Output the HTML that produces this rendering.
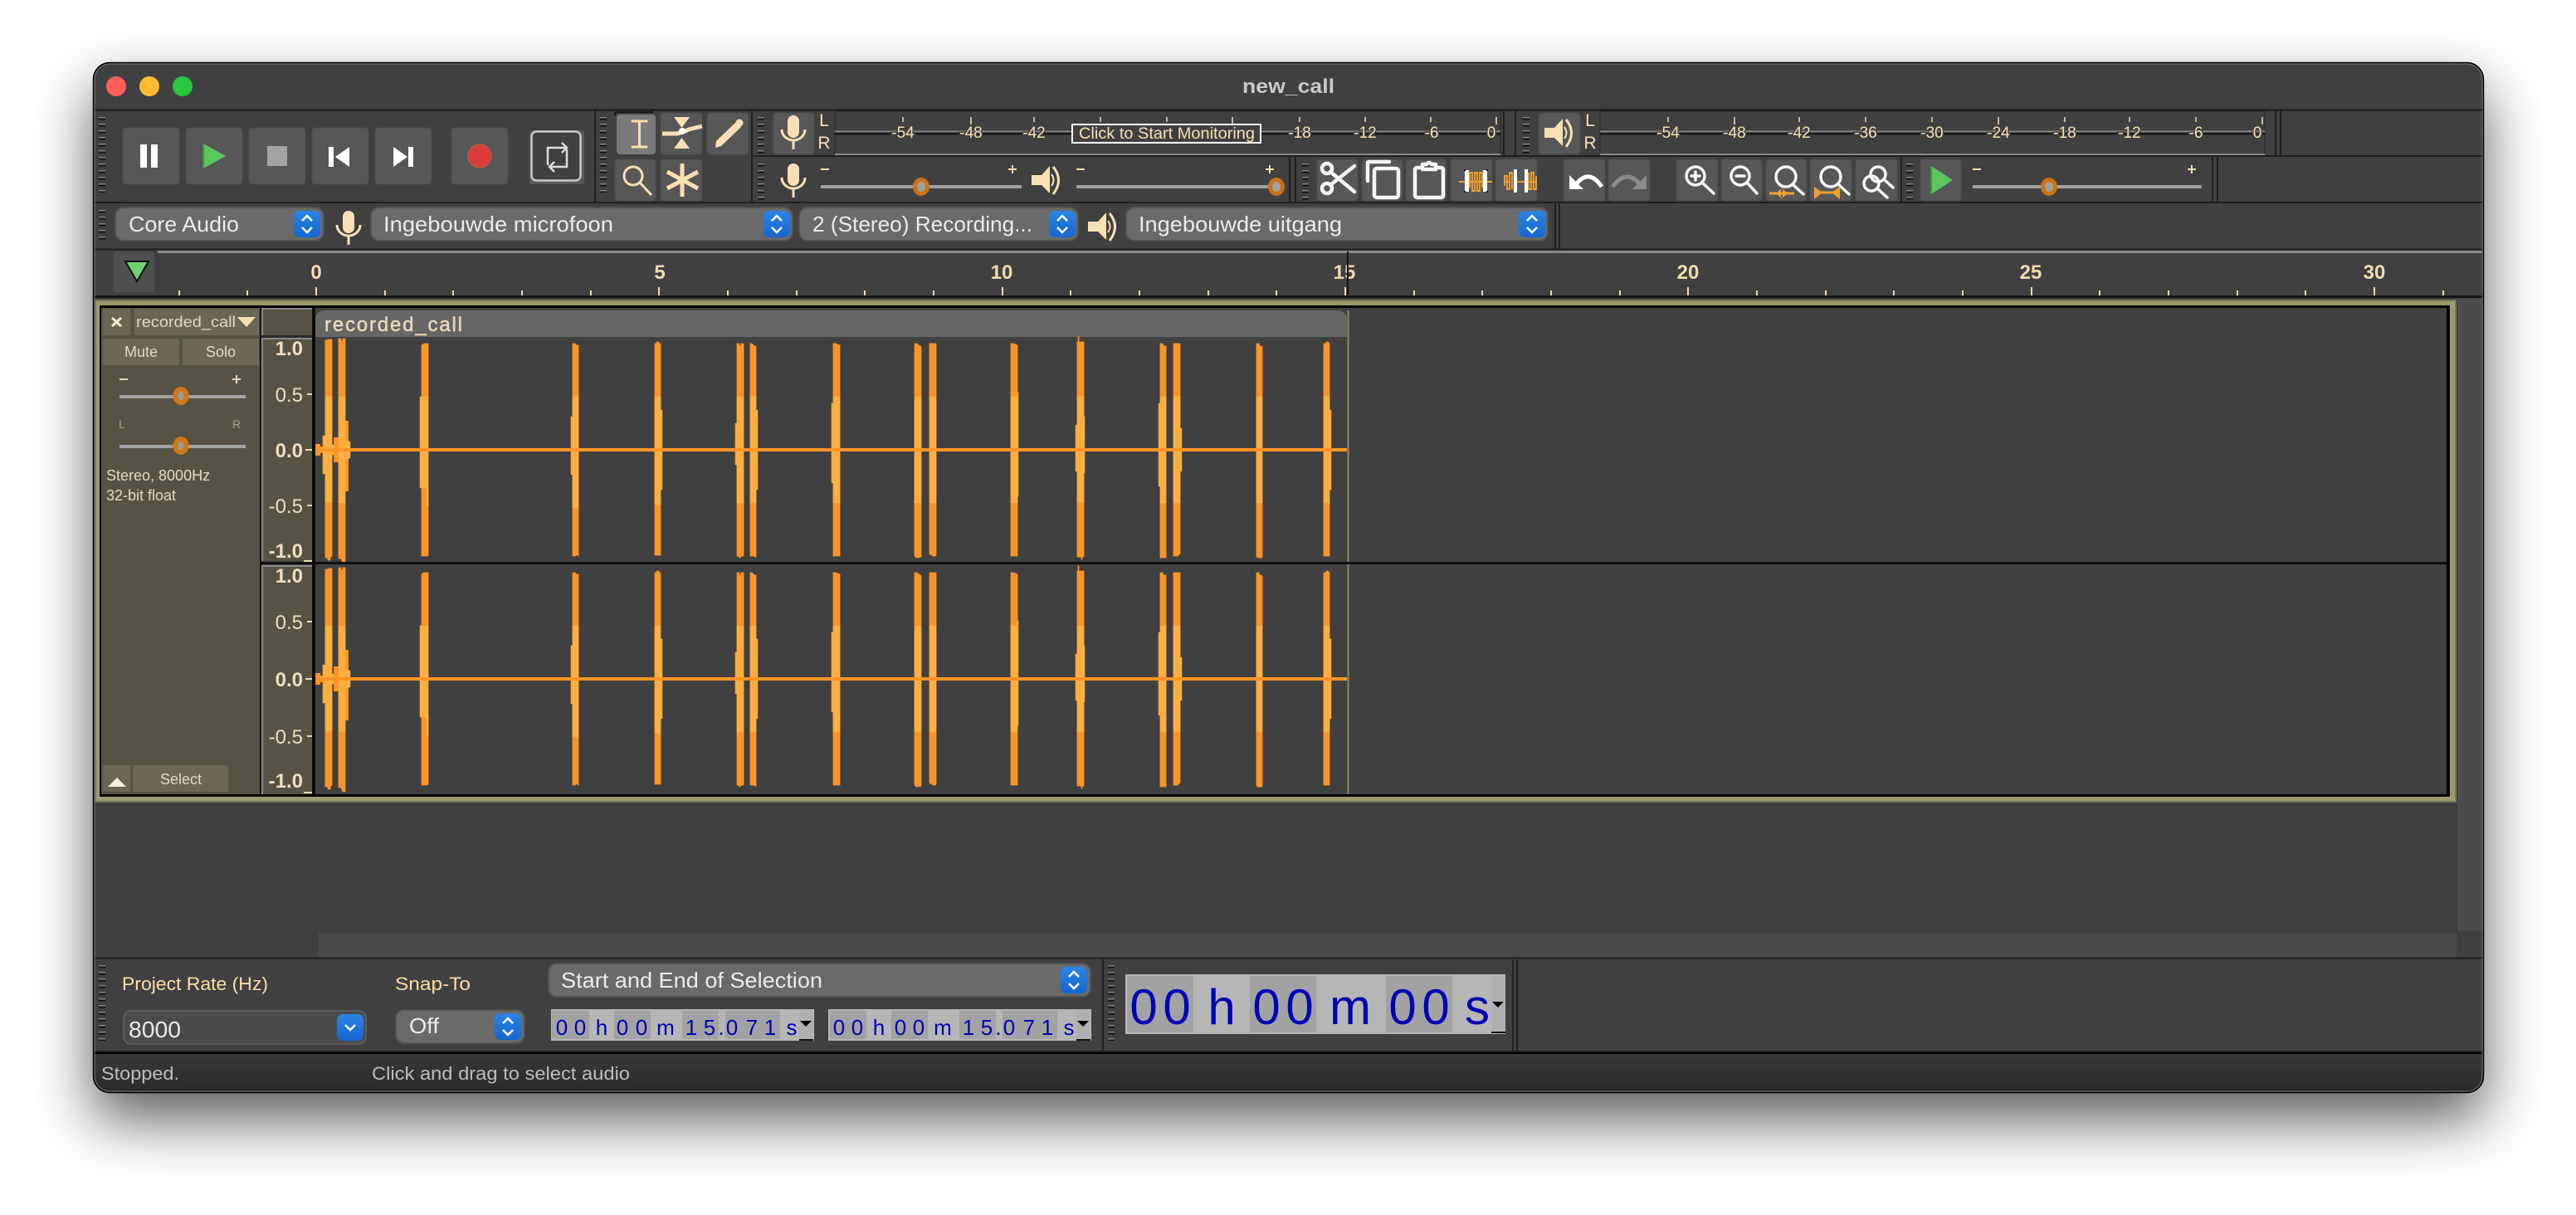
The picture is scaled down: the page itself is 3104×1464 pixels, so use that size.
<!DOCTYPE html>
<html><head><meta charset="utf-8"><title>new_call</title>
<style>
html,body{margin:0;padding:0;background:#fff;width:3104px;height:1464px;overflow:hidden}
#w{position:absolute;left:112px;top:75px;width:2881px;height:1242px;border-radius:20px;box-shadow:0 32px 70px rgba(0,0,0,.64)}
svg{position:absolute;left:0;top:0}
text{font-family:"Liberation Sans",sans-serif}
.c{fill:#f8e0b4}
.m{font-size:19px;fill:#f8e0b4;text-anchor:middle;stroke:#404040;stroke-width:3px;paint-order:stroke}
.r{font-size:24px;font-weight:bold;fill:#f3d9ad;text-anchor:middle}
.s{font-size:26px;fill:#ebebeb}
.l{font-size:22px;fill:#ffdca8}
.v{font-size:24px;fill:#f0dfbf;text-anchor:end;font-weight:bold}
.t{font-size:18px;fill:#e4d9bf}
.d{font-size:26px;fill:#0000b4;text-anchor:middle}
.D{font-size:60px;fill:#0000b4;text-anchor:middle}
.g{fill:none;stroke-width:8}
.ic{fill:none;stroke:#f8e0b4;stroke-width:3;stroke-linecap:round}
.wh{fill:none;stroke:#f6f6f6;stroke-width:4.5;stroke-linecap:round;stroke-linejoin:round}
.zm{fill:none;stroke:#f6f6f6;stroke-width:3.5;stroke-linecap:round;stroke-linejoin:round}
.or{fill:none;stroke:#f0a030;stroke-width:1.9}
</style></head>
<body>
<div id="w"></div>
<svg width="3104" height="1464" viewBox="0 0 3104 1464" xmlns="http://www.w3.org/2000/svg">
<defs>
<clipPath id="win"><rect x="112" y="75" width="2881" height="1242" rx="20"/></clipPath>
<linearGradient id="blue" x1="0" y1="0" x2="0" y2="1"><stop offset="0" stop-color="#2b84e6"/><stop offset="1" stop-color="#1566cf"/></linearGradient>
<linearGradient id="sb" x1="0" y1="0" x2="0" y2="1"><stop offset="0" stop-color="#3a3a3a"/><stop offset="1" stop-color="#292929"/></linearGradient>
<g id="step"><rect x="0" y="0" width="32" height="32" rx="7" fill="url(#blue)"/><path d="M10 12l6-6 6 6M10 20l6 6 6-6" fill="none" stroke="#fff" stroke-width="2.4"/></g>
<g id="mic"><rect x="-7" y="-14" width="14" height="27" rx="7" fill="#f8e0b4"/><path d="M-14 3a14 13 0 0 0 28 0" fill="none" stroke="#f8e0b4" stroke-width="3"/><path d="M0 16V27" stroke="#f8e0b4" stroke-width="3"/></g>
<g id="spk"><path d="M-19-6H-7L3-17V16L-7 6H-19Z" fill="#f8e0b4"/><path d="M7-16Q20 0 7 17" fill="none" stroke="#f8e0b4" stroke-width="3"/><path d="M5-7Q10 0 5 7" fill="none" stroke="#f8e0b4" stroke-width="2"/></g>
<g id="thumb"><ellipse rx="7.5" ry="8.5" fill="#a0a0a0" stroke="#cc7212" stroke-width="5"/></g>
<g id="tt"><ellipse rx="6.5" ry="8" fill="#9a9a9a" stroke="#d07818" stroke-width="6"/></g>
<g id="wave">
<path fill="#fd9427" stroke="#fd9427" stroke-width=".8" d="M392 -132h3v-1h5v2v259l-2 2v3h-3v-3h-3z
M408 -134h3v3h2v-3h3v259l0 11h-3l-2-5h-3z
M508 -126l3-2h5v255l-1 1h-7z
M690 -128h3l2 2h2v254l-2-2-2 2h-3z
M789 -128h2v-2h3v2h2v255h-7z
M888 -128h3v3h2v-3h3v256h-3l-1 2-3-2h-1z
M904 -128h2l3 3h2v254h-1l-2-1h-4z
M1004 -128h3l5 2v254h-8z
M1102 -128h3l2 2h1l2 2v253l-5 1h-1l-2-2z
M1120 -128h8v255l-1 1h-3l-2-2h-2z
M1218 -128h3l5 2v254h-8z
M1298 -130h1v-6h1v6h6v259h-2v3h-1v-3h-5z
M1398 -128h3l1 3h3v255h-7z
M1414 -128h8v253l-3 3h-5z
M1514 -128h3v2l4 2v254h-6l-1-2z
M1595 -128h3v-2h2l2 2v256h-7z"/>
<path fill="#fd9427" d="M380 -7h6V7h-6zM386 -4h3V4h-3zM402 -15h6V15h-6zM416 -35h4v85h-4z"/>
<path fill="#ffae40" stroke="#ffae40" stroke-width=".5" d="M392 -64h8V63h-8z M389 -17h3v46h-3z M400 -6h2v12h-2z
M408 -64h8v-1 129h-8z M416 -11h4v22h-4z M420 -10h2v20h-2z
M506 -64h10v4 128h-2v-22h-8z
M690 -64h7V70h-7z M688 -40h2v70h-2z
M789 -64h7V66h-7z M796 -48h2v96h-2z
M888 -64h8V64h-8z M886 -32h2v50h-2z
M904 -64h7V64h-7z M911 -48h2v96h-2z
M1004 -64h8V64h-8z M1002 -56h2v96h-2z
M1102 -64h8V64h-8z
M1120 -64h8V64h-8z
M1218 -64h8V64h-8z M1226 -70h1v126h-1z
M1298 -64h8V64h-8z M1296 -30h2v56h-2z M1306 -40h1v68h-1z
M1398 -64h7V64h-7z M1396 -56h2v100h-2z
M1414 -64h8V64h-8z M1422 -26h2v52h-2z
M1514 -64h7V64h-7z
M1595 -64h7V64h-7z M1602 -48h2v96h-2z"/>
<rect x="380" y="-2" width="1243" height="4" fill="#fd9427"/>
</g>
</defs>
<g clip-path="url(#win)">
<rect x="112" y="75" width="2881" height="1242" fill="#404040"/>
<!-- title -->
<circle cx="140" cy="104" r="12" fill="#ff5f57"/><circle cx="180" cy="104" r="12" fill="#febc2e"/><circle cx="220" cy="104" r="12" fill="#28c840"/>
<text x="1552.5" y="112" text-anchor="middle" font-size="24" font-weight="bold" fill="#c9c9c9" textLength="111" lengthAdjust="spacingAndGlyphs">new_call</text>
<!-- row lines -->
<path d="M112 132.5H2993" stroke="#161616" stroke-width="2"/>
<path d="M906 188H2993M112 244H2993M112 300.5H2993" stroke="#1e1e1e" stroke-width="2"/>
<path d="M717 133V244M906 133V244M1554 189V244M1561 189V244M2291 189V244M2666 189V244M2672 189V244M1874 245V300M1879 245V300M1812 133V188M1826 133V188M2742 133V188M2748 133V188" stroke="#202020" stroke-width="2"/>
<!-- grips -->
<g class="g">
<path d="M123 141V232M727 141V232M917 141V186M917 197V242M1573 197V242M2301 197V242M1839 141V186M123 253V290M123 1163V1254M1339 1163V1254" stroke="#858585" stroke-dasharray="1.5 6.5"/>
<path d="M123 142.5V232M727 142.5V232M917 142.5V186M917 198.5V242M1573 198.5V242M2301 198.5V242M1839 142.5V186M123 254.5V290M123 1164.5V1254M1339 1164.5V1254" stroke="#121212" stroke-dasharray="2 6"/>
</g>
<!-- transport buttons -->
<g fill="#575757" stroke="#4d4d4d">
<rect x="148" y="154" width="68" height="68" rx="4"/><rect x="224" y="154" width="68" height="68" rx="4"/><rect x="300" y="154" width="68" height="68" rx="4"/><rect x="376" y="154" width="68" height="68" rx="4"/><rect x="452" y="154" width="68" height="68" rx="4"/><rect x="544" y="154" width="68" height="68" rx="4"/>
</g>
<path d="M169 174h8v28h-8zM182 174h8v28h-8z" fill="#fff"/>
<path d="M245 173L272 188 245 203Z" fill="#5cc65c"/><path d="M245 173V203" stroke="#3c9040" stroke-width="2"/>
<rect x="322" y="176" width="24" height="24" fill="#a3a3a3"/>
<path d="M396 177h6v24h-6zM421 177V201L404 189Z" fill="#fff"/>
<path d="M474 177V201L491 189ZM492 177h6v24h-6z" fill="#fff"/>
<ellipse cx="578" cy="188" rx="14" ry="14" fill="#dc3a3a" stroke="#b86a2a" stroke-width="1"/>
<rect x="638" y="157" width="66" height="65" rx="3" fill="#595959"/>
<rect x="640.500" y="158.500" width="59" height="59" rx="6" fill="#404040" stroke="#c8c8c8" stroke-width="2.500"/>
<path d="M660 199V178H683M677 172l6 6-6 6M683 180V201H662M668 195l-6 6 6 6" fill="none" stroke="#dcdcdc" stroke-width="2.500"/>
<!-- tools -->
<g fill="#575757" stroke="#4d4d4d">
<rect x="796" y="136" width="50" height="50" rx="4"/><rect x="852" y="136" width="50" height="50" rx="4"/><rect x="741" y="192" width="49" height="50" rx="4"/><rect x="796" y="192" width="50" height="50" rx="4"/>
<rect x="932" y="136" width="49" height="50" rx="4"/>
</g>
<path d="M741 139V137Q741 135 743 135H787" fill="none" stroke="#151515" stroke-width="2"/>
<rect x="743" y="138" width="47" height="48" rx="4" fill="#7a7a7a"/>
<path d="M762 146H779M770.500 146V177M762 177H779" class="ic" stroke-linecap="butt"/>
<path d="M812 141H831L821.500 154ZM812 179H831L821.500 166Z" fill="#f8e0b4"/>
<path d="M798 161H815Q822 160 830 156L846 152" fill="none" stroke="#f8e0b4" stroke-width="5"/><circle cx="822" cy="158" r="4" fill="#fff"/>
<path d="M862 178L863 170 887 147 893 153 869 176Z" fill="#f8e0b4"/><circle cx="891" cy="148" r="4.500" fill="#f8e0b4"/>
<circle cx="763" cy="212" r="11" class="ic"/><path d="M771 220L784 234" class="ic"/>
<path d="M822 197V237M804 207L841 227M841 207L804 227" fill="none" stroke="#f8e0b4" stroke-width="5"/>
<use href="#mic" x="956" y="153"/><use href="#mic" x="956" y="211"/><use href="#mic" x="420" y="268"/>
<!-- meters -->
<text x="993" y="152" font-size="21" class="c" text-anchor="middle">L</text><text x="993" y="179" font-size="21" class="c" text-anchor="middle">R</text>
<text x="1916" y="152" font-size="21" class="c" text-anchor="middle">L</text><text x="1916" y="179" font-size="21" class="c" text-anchor="middle">R</text>
<path d="M1006 134H1808V187H1006ZM1928 134H2729V187H1928Z" fill="#404040" stroke="#262626" stroke-width="1"/>
<path d="M1006 158.500H1808M1928 158.500H2729M1006 186H1808M1928 186H2729" stroke="#8b8b8b" stroke-width="2"/>
<path d="M1006 161H1808M1928 161H2729" stroke="#1a1a1a" stroke-width="3"/>
<path d="M1088 141V147M1246 141V147M1326 141V147M1406 141V147M1566 141V147M1645 141V147M1724 141V147M2010 141V147M2168 141V147M2248 141V147M2328 141V147M2488 141V147M2566 141V147M2646 141V147M1170 141V150M1485 141V150M1803 141V150M2090 141V150M2408 141V150M2726 141V150" stroke="#f8e0b4" stroke-width="1.500"/>
<g class="m">
<text x="1088" y="166">-54</text><text x="1170" y="166">-48</text><text x="1246" y="166">-42</text><text x="1566" y="166">-18</text><text x="1645" y="166">-12</text><text x="1725" y="166">-6</text><text x="1797" y="166">0</text>
<text x="2010" y="166">-54</text><text x="2090" y="166">-48</text><text x="2168" y="166">-42</text><text x="2248" y="166">-36</text><text x="2328" y="166">-30</text><text x="2408" y="166">-24</text><text x="2488" y="166">-18</text><text x="2566" y="166">-12</text><text x="2646" y="166">-6</text><text x="2720" y="166">0</text>
</g>
<rect x="1292" y="150" width="227" height="22" fill="#404040" stroke="#fff" stroke-width="2"/>
<text x="1300" y="167" font-size="19" class="c" textLength="212" lengthAdjust="spacingAndGlyphs">Click to Start Monitoring</text>
<use href="#spk" x="1262" y="217"/>
<rect x="1854" y="136" width="50" height="50" rx="4" fill="#575757" stroke="#4d4d4d"/><use href="#spk" x="1880" y="160"/>
<use href="#spk" x="1330" y="273"/>
<!-- sliders -->
<g fill="#a0a0a0"><rect x="989" y="223" width="242" height="4"/><rect x="1297" y="223" width="250" height="4"/><rect x="2377" y="223" width="276" height="4"/></g>
<use href="#thumb" x="1110" y="225"/><use href="#thumb" x="1538" y="225"/><use href="#thumb" x="2469" y="225"/>
<g stroke="#f8e0b4" stroke-width="2"><path d="M989 204H999M1215 204H1225M1220 199V209M1297 204H1307M1525 204H1535M1530 199V209M2377 204H2387M2636 204H2646M2641 199V209"/></g>
<!-- edit buttons -->
<g fill="#575757" stroke="#4d4d4d">
<rect x="1587" y="192" width="49" height="50" rx="4"/><rect x="1641" y="192" width="49" height="50" rx="4"/><rect x="1694" y="192" width="49" height="50" rx="4"/><rect x="1748" y="192" width="50" height="50" rx="4"/><rect x="1802" y="192" width="50" height="50" rx="4"/><rect x="1884" y="192" width="50" height="50" rx="4"/><rect x="1938" y="192" width="50" height="50" rx="4"/><rect x="2020" y="192" width="50" height="50" rx="4"/><rect x="2074" y="192" width="49" height="50" rx="4"/><rect x="2128" y="192" width="49" height="50" rx="4"/><rect x="2181" y="192" width="50" height="50" rx="4"/><rect x="2236" y="192" width="50" height="50" rx="4"/><rect x="2314" y="192" width="49" height="50" rx="4"/>
</g>
<g class="wh">
<circle cx="1599" cy="203" r="6"/><circle cx="1599" cy="227" r="6"/><path d="M1603 207L1632 231M1603 223L1632 200"/>
<path d="M1648 218V196Q1648 195 1650 195H1674"/><rect x="1656" y="203" width="29" height="35" rx="3"/>
<path d="M1714 202H1708Q1705 202 1705 205V235Q1705 238 1708 238H1736Q1739 238 1739 235V205Q1739 202 1736 202H1730M1714 204V198H1719Q1722 194 1725 198H1730V204Z"/>
</g>
<path d="M1758 219H1798M1812 219H1820M1827 219H1837M1840 219H1852" stroke="#f0a030" stroke-width="2"/>
<rect x="1765" y="205" width="5" height="26" fill="#fff"/><rect x="1787" y="205" width="5" height="26" fill="#fff"/>
<path d="M1771 226V208H1774V230H1777V208H1780V230H1783V208H1786V226" class="or"/>
<path d="M1813 224V212H1816V228H1819V208H1822V228" class="or"/><path d="M1842 208V228H1845V208H1848V228H1851V212" class="or"/>
<rect x="1824" y="204" width="4" height="28" fill="#fff"/><rect x="1837" y="204" width="4" height="28" fill="#fff"/>
<path d="M1764 204h2v2h-2zM1791 204h2v2h-2zM1764 230h2v2h-2zM1791 230h2v2h-2z" fill="#111"/>
<path d="M1891 211V228H1908Z" fill="#fff"/><path d="M1900 221Q1915 203 1930 225" fill="none" stroke="#fff" stroke-width="5"/>
<path d="M1984 211V228H1967Z" fill="#8b8b8b"/><path d="M1975 221Q1960 203 1943 225" fill="none" stroke="#8b8b8b" stroke-width="5"/>
<g class="zm">
<circle cx="2043" cy="212" r="11"/><path d="M2051 220L2065 233M2038 212H2048M2043 207V217"/>
<circle cx="2097" cy="212" r="11"/><path d="M2105 220L2117 233M2092 212H2102"/>
<circle cx="2152" cy="213" r="12"/><path d="M2160 222L2173 234"/>
<circle cx="2206" cy="213" r="12"/><path d="M2215 222L2228 234"/>
<circle cx="2263" cy="210" r="9"/><circle cx="2255" cy="221" r="9"/><path d="M2270 216L2281 226M2262 227L2274 238"/>
</g>
<path d="M2132 233H2162" stroke="#f0a030" stroke-width="3"/><path d="M2148 226V240L2140 233ZM2146 226V240L2154 233Z" fill="#f0a030"/>
<path d="M2186 232H2217" stroke="#f0a030" stroke-width="3"/><path d="M2186 225V240L2196 232ZM2217 225V240L2207 232Z" fill="#f0a030"/>
<path d="M2328 200L2354 217 2328 234Z" transform="translate(-1 0)" fill="#5cc65c"/><path d="M2327 200V234" stroke="#3c9040" stroke-width="2"/>
<!-- device selects -->
<g fill="#6a6a6a" stroke="#525252" stroke-width="2">
<rect x="139" y="250" width="251" height="40" rx="10"/><rect x="447" y="250" width="508" height="40" rx="10"/><rect x="963" y="250" width="336" height="40" rx="10"/><rect x="1357" y="250" width="508" height="40" rx="10"/>
<rect x="661" y="1161" width="653" height="40" rx="10"/><rect x="477" y="1217" width="155" height="40" rx="10"/>
</g>
<rect x="149" y="1218" width="292" height="40" rx="9" fill="#4b4b4b" stroke="#5c5c5c" stroke-width="2"/>
<use href="#step" x="354" y="254"/><use href="#step" x="920" y="254"/><use href="#step" x="1264" y="254"/><use href="#step" x="1830" y="254"/><use href="#step" x="1278" y="1165"/><use href="#step" x="596" y="1221"/>
<rect x="406" y="1222" width="32" height="32" rx="7" fill="url(#blue)"/><path d="M416 1235l6 6 6-6" fill="none" stroke="#fff" stroke-width="2.400"/>
<g class="s">
<text x="155" y="279" textLength="133" lengthAdjust="spacingAndGlyphs">Core Audio</text>
<text x="462" y="279" textLength="277" lengthAdjust="spacingAndGlyphs">Ingebouwde microfoon</text>
<text x="979" y="279" textLength="265" lengthAdjust="spacingAndGlyphs">2 (Stereo) Recording...</text>
<text x="1372" y="279" textLength="245" lengthAdjust="spacingAndGlyphs">Ingebouwde uitgang</text>
<text x="676" y="1190" textLength="315" lengthAdjust="spacingAndGlyphs">Start and End of Selection</text>
<text x="155" y="1250" font-size="28" textLength="63" lengthAdjust="spacingAndGlyphs">8000</text>
<text x="493" y="1245" textLength="36" lengthAdjust="spacingAndGlyphs">Off</text>
</g>
<!-- ruler -->
<rect x="190" y="302" width="2802" height="3" fill="#8a8a8a"/>
<rect x="136" y="303" width="50" height="50" rx="4" fill="#4f4f4f"/>
<path d="M151 315H179L165 339Z" fill="#6fcf70" stroke="#111" stroke-width="2"/>
<g class="r"><text x="381" y="336">0</text><text x="795" y="336">5</text><text x="1207" y="336">10</text><text x="1620" y="336">15</text><text x="2034" y="336">20</text><text x="2447" y="336">25</text><text x="2861" y="336">30</text></g>
<path d="M216 350V356M298 350V356M464 350V356M546 350V356M629 350V356M712 350V356M877 350V356M960 350V356M1042 350V356M1125 350V356M1290 350V356M1373 350V356M1456 350V356M1538 350V356M1704 350V356M1786 350V356M1869 350V356M1952 350V356M2117 350V356M2200 350V356M2282 350V356M2365 350V356M2530 350V356M2613 350V356M2696 350V356M2778 350V356M2944 350V356M381 346V356M794 346V356M1208 346V356M1621 346V356M2034 346V356M2448 346V356M2861 346V356" stroke="#f3d9ad" stroke-width="2"/>
<path d="M1624 303V355" stroke="#111" stroke-width="2"/>
<rect x="112" y="356" width="2881" height="3" fill="#141414"/>
<!-- scrollbars -->
<rect x="2962" y="359" width="31" height="763" fill="#4b4b4b"/><rect x="2962" y="359" width="1" height="763" fill="#555"/>
<rect x="384" y="1124" width="2576" height="30" fill="#4a4a4a"/>
<path d="M112 1154.500H2993" stroke="#1c1c1c" stroke-width="2"/>
<!-- track -->
<rect x="115" y="362" width="2844" height="604" fill="#9b9b6c"/>
<rect x="115" y="362" width="2844" height="604" fill="none" stroke="#77775a" stroke-width="2"/>
<rect x="120" y="368" width="2832" height="592" fill="#000"/>
<rect x="122" y="371" width="2826" height="586" fill="#404040"/>
<rect x="122" y="371" width="191" height="586" fill="#575344"/>
<rect x="313" y="371" width="2" height="586" fill="#111"/>
<rect x="315" y="371" width="61" height="33" fill="#575344"/><path d="M316 404V372H376" fill="none" stroke="#8a8a8a" stroke-width="2"/>
<rect x="315" y="404" width="61" height="3" fill="#2c2c2c"/>
<rect x="315" y="407" width="61" height="269" fill="#575344"/><path d="M316 676V408H376" fill="none" stroke="#8a8a8a" stroke-width="2"/>
<rect x="315" y="681" width="61" height="276" fill="#575344"/><path d="M316 957V682H376" fill="none" stroke="#8a8a8a" stroke-width="2"/>
<rect x="376" y="371" width="4" height="586" fill="#0c0c0c"/>
<path d="M380 406V386Q380 374 392 374H1611Q1623 374 1623 386V406Z" fill="#666"/>
<text x="391" y="399" font-size="24" fill="#e9d9b9" stroke="#e9d9b9" stroke-width=".5" textLength="166" lengthAdjust="spacing">recorded_call</text>
<use href="#wave" x="0" y="542"/><use href="#wave" x="0" y="818"/>
<path d="M1624.500 374V957" stroke="#8c8a72" stroke-width="2"/>
<rect x="315" y="677" width="2633" height="3" fill="#0e0e0e"/>
<!-- track labels -->
<g fill="#6b6754">
<rect x="124" y="372" width="33" height="32"/><rect x="162" y="372" width="150" height="32"/><rect x="124" y="408" width="92" height="32"/><rect x="220" y="408" width="92" height="32"/><rect x="124" y="922" width="33" height="32"/><rect x="160" y="922" width="115" height="32"/>
</g>
<path d="M135 383L146 393M146 383L135 393" stroke="#f5e8cc" stroke-width="3"/>
<text x="164" y="394" class="t" textLength="120" lengthAdjust="spacingAndGlyphs">recorded_call</text>
<path d="M286 382H308L297 394Z" fill="#f8e0b4"/>
<text x="170" y="430" class="t" text-anchor="middle">Mute</text><text x="266" y="430" class="t" text-anchor="middle">Solo</text>
<text x="218" y="945" class="t" text-anchor="middle">Select</text>
<path d="M130 948H152L141 937Z" fill="#f8eed8"/>
<path d="M144 476h152v4H144zM144 536h152v4H144z" fill="#a3a3a3"/>
<use href="#tt" x="218" y="477"/><use href="#tt" x="218" y="537"/>
<path d="M144 457H154M280 457H290M285 452V462" stroke="#e4d9bf" stroke-width="2"/>
<text x="147" y="516" font-size="14" text-anchor="middle" fill="#a9a28c">L</text><text x="285" y="516" font-size="14" text-anchor="middle" fill="#a9a28c">R</text>
<text x="128" y="579" class="t">Stereo, 8000Hz</text><text x="128" y="603" class="t">32-bit float</text>
<g class="v">
<text x="365" y="428">1.0</text><text x="365" y="484" font-weight="normal" style="font-weight:normal">0.5</text><text x="365" y="551">0.0</text><text x="365" y="618" style="font-weight:normal">-0.5</text><text x="365" y="672">-1.0</text>
<text x="365" y="702">1.0</text><text x="365" y="758" style="font-weight:normal">0.5</text><text x="365" y="827">0.0</text><text x="365" y="896" style="font-weight:normal">-0.5</text><text x="365" y="949">-1.0</text>
</g>
<path d="M370 475H376M368 542H376M370 609H376M366 676H376M370 749H376M368 818H376M370 887H376M366 955H376" stroke="#e9d9b9" stroke-width="2"/>
<!-- bottom toolbar -->
<text x="147" y="1193" class="l" textLength="176" lengthAdjust="spacingAndGlyphs">Project Rate (Hz)</text>
<text x="476" y="1193" class="l" textLength="91" lengthAdjust="spacingAndGlyphs">Snap-To</text>
<path d="M1329 1155V1267M1823 1157V1267M1828 1157V1267" stroke="#222" stroke-width="2"/>
<!-- numeric 1 -->
<rect x="664" y="1216" width="317" height="38" fill="#b6b6b6"/><g fill="#a2a2a2"><rect x="665" y="1218" width="45" height="34"/><rect x="740" y="1218" width="44" height="34"/><rect x="822" y="1218" width="44" height="34"/><rect x="874" y="1218" width="66" height="34"/></g>
<rect x="963" y="1217" width="16" height="37" fill="#b0b0b0"/><rect x="963" y="1252" width="17" height="2" fill="#111"/><path d="M964 1230H978L971 1237Z" fill="#000"/>
<g class="d"><text x="677" y="1247">0</text><text x="699" y="1247">0</text><text x="725" y="1247">h</text><text x="750" y="1247">0</text><text x="773" y="1247">0</text><text x="802" y="1247">m</text><text x="833" y="1247">1</text><text x="855" y="1247">5</text><text x="869" y="1247">.</text><text x="882" y="1247">0</text><text x="906" y="1247">7</text><text x="928" y="1247">1</text><text x="954" y="1247">s</text></g>
<!-- numeric 2 -->
<rect x="998" y="1216" width="317" height="38" fill="#b6b6b6"/><g fill="#a2a2a2"><rect x="1000" y="1218" width="44" height="34"/><rect x="1074" y="1218" width="44" height="34"/><rect x="1156" y="1218" width="44" height="34"/><rect x="1208" y="1218" width="66" height="34"/></g>
<rect x="1297" y="1217" width="16" height="37" fill="#b0b0b0"/><rect x="1297" y="1252" width="17" height="2" fill="#111"/><path d="M1298 1230H1312L1305 1237Z" fill="#000"/>
<g class="d"><text x="1011" y="1247">0</text><text x="1033" y="1247">0</text><text x="1059" y="1247">h</text><text x="1085" y="1247">0</text><text x="1107" y="1247">0</text><text x="1136" y="1247">m</text><text x="1167" y="1247">1</text><text x="1189" y="1247">5</text><text x="1203" y="1247">.</text><text x="1216" y="1247">0</text><text x="1240" y="1247">7</text><text x="1262" y="1247">1</text><text x="1288" y="1247">s</text></g>
<!-- big time -->
<rect x="1356" y="1174" width="458" height="72" fill="#b6b6b6"/><g fill="#a2a2a2"><rect x="1358" y="1176" width="80" height="68"/><rect x="1506" y="1176" width="80" height="68"/><rect x="1670" y="1176" width="80" height="68"/></g>
<rect x="1797" y="1176" width="16" height="68" fill="#b0b0b0"/><rect x="1797" y="1243" width="17" height="2" fill="#111"/><path d="M1798 1207H1812L1805 1214Z" fill="#000"/>
<g class="D"><text x="1378" y="1234">0</text><text x="1418" y="1234">0</text><text x="1472" y="1234">h</text><text x="1526" y="1234">0</text><text x="1566" y="1234">0</text><text x="1627" y="1234">m</text><text x="1690" y="1234">0</text><text x="1730" y="1234">0</text><text x="1780" y="1234">s</text></g>
<!-- status -->
<rect x="112" y="1267" width="2881" height="50" fill="url(#sb)"/>
<rect x="112" y="1266" width="2881" height="2" fill="#1e1e1e"/><rect x="112" y="1268" width="2881" height="2" fill="#000"/>
<text x="122" y="1301" font-size="22" fill="#bdbdbd" textLength="94" lengthAdjust="spacingAndGlyphs">Stopped.</text>
<text x="448" y="1301" font-size="22" fill="#bdbdbd" textLength="311" lengthAdjust="spacingAndGlyphs">Click and drag to select audio</text>
</g>
<rect x="112.500" y="75.500" width="2880" height="1241" rx="20" fill="none" stroke="#000" stroke-width="1.500"/>
<rect x="114" y="77" width="2877" height="1238" rx="18.500" fill="none" stroke="#7a7a7a" stroke-width="1"/>
</svg>
</body></html>
